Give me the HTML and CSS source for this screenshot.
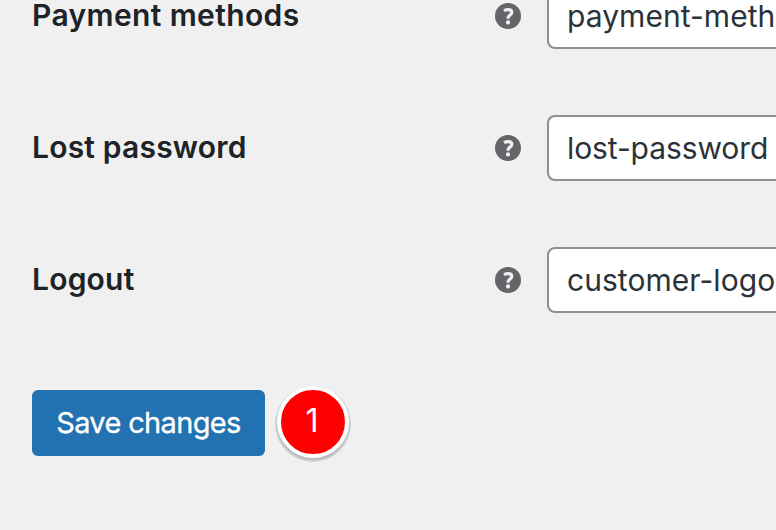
FILE: index.html
```
<!DOCTYPE html>
<html lang="en">
<head>
    <meta charset="UTF-8">
    <meta name="viewport" content="width=device-width, initial-scale=1.0">
    <title>Account endpoints</title>
    <link rel="stylesheet" href="styles.css">
</head>
<body>

    <!-- Help icon, shared by every row -->
    <svg width="0" height="0" class="sprite">
        <symbol id="help" viewBox="0 0 26 26">
            <circle cx="13" cy="13" r="13" fill="#646568"/>
            <path d="M9 7.7Q11 6.6 13.1 6.6Q16.8 6.6 16.8 9.3Q16.8 10.9 14.9 12.1Q13 13.3 13 15.8" fill="none" stroke="#f0f0f1" stroke-width="3.2"/>
            <circle cx="13" cy="19.4" r="2.1" fill="#f0f0f1"/>
        </symbol>
    </svg>

    <form class="settings">
        <div class="row">
            <label class="label-payment" for="payment">Payment methods</label>
            <svg class="help"><use href="#help"/></svg>
            <input class="value-wide" id="payment" type="text" value="payment-methods">
        </div>
        <div class="row">
            <label for="password">Lost password</label>
            <svg class="help"><use href="#help"/></svg>
            <input id="password" type="text" value="lost-password">
        </div>
        <div class="row">
            <label for="logout">Logout</label>
            <svg class="help"><use href="#help"/></svg>
            <input class="value-wide" id="logout" type="text" value="customer-logout">
        </div>

        <div class="actions">
            <button class="save-button" type="button">Save changes</button>
            <span class="step">1</span>
        </div>
    </form>

</body>
</html>
```
FILE: styles.css
```
body {
    margin: 0;
    height: 530px;
    overflow: hidden;
    background-color: #f0f0f0;
    font-family: Inter, "Liberation Sans", sans-serif;
    font-size: 30px;
    display: flow-root;
}
.sprite {
    display: block;
}
.settings {
    box-sizing: border-box;
    width: 100%;
    margin-top: -17px;
    padding-left: 32px;
    overflow: hidden;
}
.row {
    display: grid;
    grid-template-columns: 463px 52px 553px;
    align-items: center;
    height: 66px;
    margin-bottom: 66px;
}
label {
    color: #1d2327;
    font-weight: 600;
    line-height: 36px;
    padding-bottom: 3px;
    letter-spacing: 0.2px;
}
.label-payment {
    letter-spacing: 0.37px;
}
.help {
    display: block;
    width: 26px;
    height: 26px;
    margin-bottom: 1px;
}
input {
    box-sizing: border-box;
    width: 100%;
    height: 66px;
    padding: 0 16px 0 18px;
    border: 2px solid #8c8f94;
    border-radius: 8px;
    background-color: #fff;
    color: #2c3338;
    font: inherit;
    letter-spacing: -0.1px;
}
.value-wide {
    letter-spacing: 0.05px;
}
.actions {
    display: flex;
    align-items: center;
    height: 80px;
    margin-top: 70px;
}
.save-button {
    width: 233px;
    height: 66px;
    padding: 0 0 2px;
    border: none;
    border-radius: 6px;
    background-color: #2271b1;
    color: #fff;
    font: inherit;
    font-size: 29px;
    letter-spacing: -0.65px;
    -webkit-text-stroke: 0.3px #fff;
}
.step {
    box-sizing: border-box;
    width: 72px;
    height: 72px;
    margin: 0 0 2px 12px;
    padding-right: 2px;
    border: 4px solid #fff;
    border-radius: 50%;
    background-color: #f00;
    box-shadow: 0 2px 1px 0 #b4b8bb, 0 2px 0 2px #cdd0d3;
    color: #fff;
    font-size: 32px;
    line-height: 61px;
    text-align: center;
}
```
